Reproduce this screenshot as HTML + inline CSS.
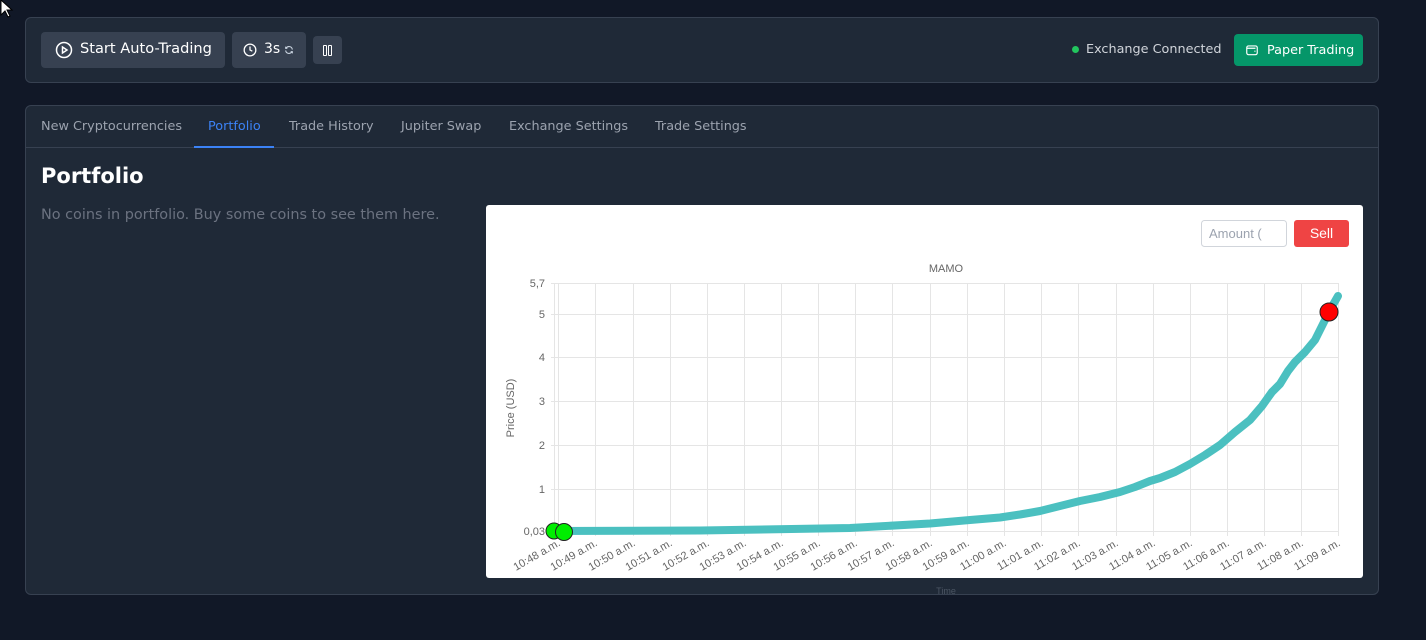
<!DOCTYPE html>
<html><head><style>
body{margin:0;width:1426px;height:640px;background:#111827;font-family:"DejaVu Sans","Liberation Sans",sans-serif;position:relative;overflow:hidden}
.top{position:absolute;left:25px;top:17px;width:1352px;height:64px;background:#1f2937;border:1px solid #374151;border-radius:6px}
.btn{position:absolute;background:#374151;border-radius:4px;color:#fff}
.main{position:absolute;left:25px;top:105px;width:1352px;height:488px;background:#1f2937;border:1px solid #374151;border-radius:6px}
.tab{position:absolute;top:13px;font-size:12.8px;color:#9ca3af}
</style></head><body>
<div class="top">
 <div class="btn" style="left:15px;top:14px;width:184px;height:36px">
  <svg style="position:absolute;left:14px;top:9px" width="18" height="18" viewBox="0 0 24 24" fill="none" stroke="#fff" stroke-width="2"><circle cx="12" cy="12" r="10"/><path d="M10 8l6 4-6 4z"/></svg>
  <span style="position:absolute;left:39px;top:8px;font-size:14.6px">Start Auto-Trading</span></div>
 <div class="btn" style="left:206px;top:14px;width:74px;height:36px">
  <svg style="position:absolute;left:11px;top:11px" width="14" height="14" viewBox="0 0 24 24" fill="none" stroke="#fff" stroke-width="2.2"><circle cx="12" cy="12" r="10"/><path d="M12 6v6l4 2"/></svg>
  <span style="position:absolute;left:32px;top:9px;font-size:14px">3s</span>
  <svg style="position:absolute;left:52px;top:13px" width="10" height="10" viewBox="0 0 24 24" fill="none" stroke="#cbd5e1" stroke-width="2.5"><path d="M20 11A8 8 0 0 0 5 8M4 4v4h4M4 13a8 8 0 0 0 15 3M20 20v-4h-4"/></svg></div>
 <div class="btn" style="left:287px;top:18px;width:29px;height:28px">
  <div style="position:absolute;left:10px;top:9px;width:2px;height:9px;border:1px solid #fff;border-radius:1px"></div>
  <div style="position:absolute;left:15px;top:9px;width:2px;height:9px;border:1px solid #fff;border-radius:1px"></div></div>
 <div style="position:absolute;left:1046px;top:28px;width:7px;height:7px;border-radius:50%;background:#22c55e"></div>
 <span style="position:absolute;left:1060px;top:24px;font-size:12.8px;color:#d1d5db">Exchange Connected</span>
 <div style="position:absolute;left:1208px;top:16px;width:129px;height:32px;background:#059669;border-radius:4px;color:#fff">
  <svg style="position:absolute;left:11px;top:9px" width="14" height="14" viewBox="0 0 24 24" fill="none" stroke="#fff" stroke-width="2"><rect x="3" y="5" width="18" height="15" rx="3"/><path d="M3 9h15M16 14h2"/></svg>
  <span style="position:absolute;left:33px;top:9px;font-size:12.8px">Paper Trading</span></div>
</div>
<div class="main">
 <div style="position:absolute;left:0;right:0;top:41px;border-top:1px solid #374151"></div>
 <span class="tab" style="left:15px">New Cryptocurrencies</span>
 <span class="tab" style="left:182px;color:#3b82f6">Portfolio</span>
 <div style="position:absolute;left:168px;top:40px;width:80px;height:2px;background:#3b82f6"></div>
 <span class="tab" style="left:263px">Trade History</span>
 <span class="tab" style="left:375px">Jupiter Swap</span>
 <span class="tab" style="left:483px">Exchange Settings</span>
 <span class="tab" style="left:629px">Trade Settings</span>
 <div style="position:absolute;left:15px;top:58px;font-size:21px;font-weight:bold;color:#fff">Portfolio</div>
 <div style="position:absolute;left:15px;top:101px;font-size:14.4px;color:#6b7280">No coins in portfolio. Buy some coins to see them here.</div>
</div>
<svg style="position:absolute;left:0;top:0" width="1426" height="640" font-family="Liberation Sans,sans-serif">
 <rect x="486" y="205" width="877" height="373" rx="3" fill="#fff"/>
 <rect x="1201.5" y="220.5" width="85" height="26" rx="3" fill="#fff" stroke="#d1d5db"/>
 <text x="1209" y="238" font-size="13" fill="#9ca3af">Amount (</text>
 <rect x="1294" y="220" width="55" height="27" rx="3" fill="#ef4444"/>
 <text x="1321.5" y="238" font-size="14" fill="#fff" text-anchor="middle">Sell</text>
 <text x="946" y="272" font-size="11" fill="#666" text-anchor="middle">MAMO</text>
 <g stroke="#e5e5e5" stroke-width="1">
  <line x1="551" y1="283.5" x2="1338" y2="283.5"/><line x1="551" y1="314.5" x2="1338" y2="314.5"/>
  <line x1="551" y1="357.5" x2="1338" y2="357.5"/><line x1="551" y1="401.5" x2="1338" y2="401.5"/>
  <line x1="551" y1="445.5" x2="1338" y2="445.5"/><line x1="551" y1="489.5" x2="1338" y2="489.5"/>
  <line x1="551" y1="531.5" x2="1338" y2="531.5"/>
  <line x1="554.5" y1="283" x2="554.5" y2="536"/>
  <line x1="558.5" y1="283" x2="558.5" y2="536"/><line x1="595.5" y1="283" x2="595.5" y2="536"/><line x1="633.5" y1="283" x2="633.5" y2="536"/><line x1="670.5" y1="283" x2="670.5" y2="536"/><line x1="707.5" y1="283" x2="707.5" y2="536"/><line x1="744.5" y1="283" x2="744.5" y2="536"/><line x1="781.5" y1="283" x2="781.5" y2="536"/><line x1="818.5" y1="283" x2="818.5" y2="536"/><line x1="855.5" y1="283" x2="855.5" y2="536"/><line x1="892.5" y1="283" x2="892.5" y2="536"/><line x1="930.5" y1="283" x2="930.5" y2="536"/><line x1="967.5" y1="283" x2="967.5" y2="536"/><line x1="1004.5" y1="283" x2="1004.5" y2="536"/><line x1="1041.5" y1="283" x2="1041.5" y2="536"/><line x1="1078.5" y1="283" x2="1078.5" y2="536"/><line x1="1116.5" y1="283" x2="1116.5" y2="536"/><line x1="1153.5" y1="283" x2="1153.5" y2="536"/><line x1="1190.5" y1="283" x2="1190.5" y2="536"/><line x1="1227.5" y1="283" x2="1227.5" y2="536"/><line x1="1264.5" y1="283" x2="1264.5" y2="536"/><line x1="1301.5" y1="283" x2="1301.5" y2="536"/><line x1="1338.5" y1="283" x2="1338.5" y2="536"/>
 </g>
 <g font-size="11" fill="#666" text-anchor="end">
  <text x="545" y="287">5,7</text><text x="545" y="318">5</text><text x="545" y="361">4</text><text x="545" y="405">3</text><text x="545" y="449">2</text><text x="545" y="493">1</text><text x="545" y="535">0,03</text>
 </g>
 <text transform="translate(514,408) rotate(-90)" font-size="11" fill="#666" text-anchor="middle">Price (USD)</text>
 <g font-size="11" fill="#666" text-anchor="end">
  <text transform="translate(561,545) rotate(-30)">10:48 a.m.</text>
  <text transform="translate(598,545) rotate(-30)">10:49 a.m.</text>
  <text transform="translate(636,545) rotate(-30)">10:50 a.m.</text>
  <text transform="translate(673,545) rotate(-30)">10:51 a.m.</text>
  <text transform="translate(710,545) rotate(-30)">10:52 a.m.</text>
  <text transform="translate(747,545) rotate(-30)">10:53 a.m.</text>
  <text transform="translate(784,545) rotate(-30)">10:54 a.m.</text>
  <text transform="translate(821,545) rotate(-30)">10:55 a.m.</text>
  <text transform="translate(858,545) rotate(-30)">10:56 a.m.</text>
  <text transform="translate(895,545) rotate(-30)">10:57 a.m.</text>
  <text transform="translate(933,545) rotate(-30)">10:58 a.m.</text>
  <text transform="translate(970,545) rotate(-30)">10:59 a.m.</text>
  <text transform="translate(1007,545) rotate(-30)">11:00 a.m.</text>
  <text transform="translate(1044,545) rotate(-30)">11:01 a.m.</text>
  <text transform="translate(1081,545) rotate(-30)">11:02 a.m.</text>
  <text transform="translate(1119,545) rotate(-30)">11:03 a.m.</text>
  <text transform="translate(1156,545) rotate(-30)">11:04 a.m.</text>
  <text transform="translate(1193,545) rotate(-30)">11:05 a.m.</text>
  <text transform="translate(1230,545) rotate(-30)">11:06 a.m.</text>
  <text transform="translate(1267,545) rotate(-30)">11:07 a.m.</text>
  <text transform="translate(1304,545) rotate(-30)">11:08 a.m.</text>
  <text transform="translate(1341,545) rotate(-30)">11:09 a.m.</text>
 </g>
 <text x="946" y="594" font-size="9" fill="#4b5563" text-anchor="middle">Time</text>
 <path d="M550 531 L700 530.5 L850 528 L930 523.5 L970 520 L1000 517.5 L1020 514.5 L1040 511 L1060 506 L1080 501 L1100 497 L1120 492 L1135 487 L1150 481 L1160 478 L1175 472 L1190 464 L1205 455 L1220 445 L1235 432 L1250 420 L1262 406 L1272 392 L1280 384 L1288 371 L1295 362 L1305 352 L1315 340 L1322 326 L1330 310 L1338 296" fill="none" stroke="#4bc0c0" stroke-width="8" stroke-linecap="round" stroke-linejoin="round"/>
 <circle cx="554" cy="531" r="8" fill="#00ee00" stroke="#222"/>
 <circle cx="564" cy="532" r="8.5" fill="#00ee00" stroke="#222"/>
 <circle cx="1329" cy="312" r="9" fill="#f00" stroke="#222"/>
 <path d="M1 0 L1 15 L5 11 L8 17 L10 16 L7 10 L12 10 Z" fill="#fff" stroke="#000"/>
</svg>
</body></html>
